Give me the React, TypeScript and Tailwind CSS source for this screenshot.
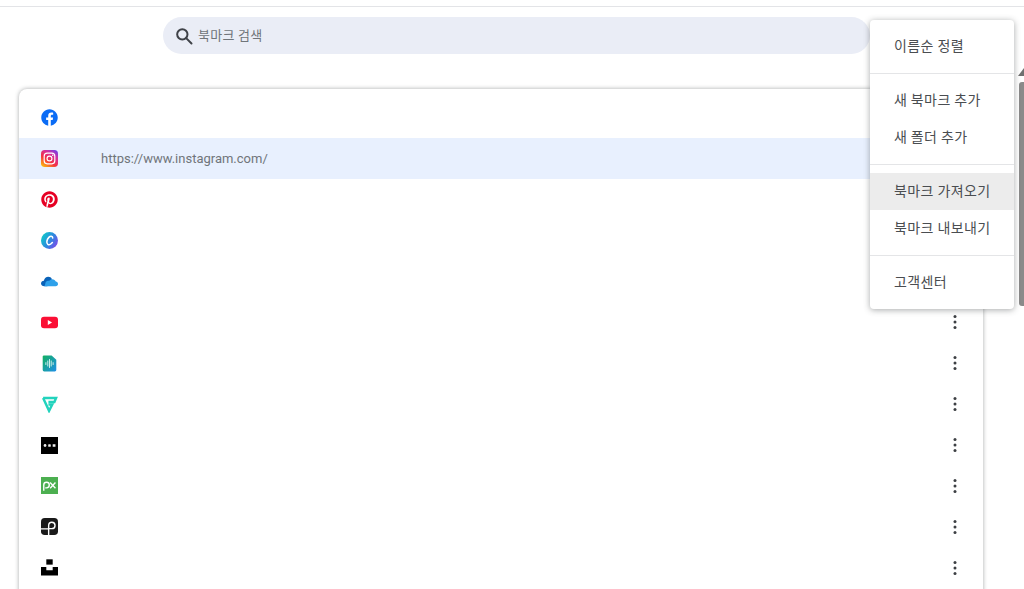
import React from "react";
import { FaFacebook, FaPinterest } from "react-icons/fa";

const F = { fontFamily: '"Noto Sans CJK KR","Noto Sans",sans-serif' };

function Icon({ i }: { i: number }) {
  const c = "w-[17px] h-[17px] block";
  switch (i) {
    case 0:
      return <FaFacebook className={`${c} text-[#0b6cf5]`} />;
    case 1:
      return (
        <svg viewBox="0 0 16 16" className={c}>
          <defs>
            <linearGradient id="ig" x1="0.1" y1="1" x2="0.8" y2="0">
              <stop offset="0" stopColor="#fdc30b" />
              <stop offset="0.4" stopColor="#f5333f" />
              <stop offset="0.75" stopColor="#d32ea0" />
              <stop offset="1" stopColor="#7a3fe0" />
            </linearGradient>
          </defs>
          <rect width="16" height="16" rx="3.5" fill="url(#ig)" />
          <rect x="3" y="3" width="10" height="10" rx="2.8" fill="none" stroke="#fff" strokeWidth="1.1" />
          <circle cx="8" cy="8" r="2.3" fill="none" stroke="#fff" strokeWidth="1.1" />
          <circle cx="11" cy="5" r="0.7" fill="#fff" />
        </svg>
      );
    case 2:
      return <FaPinterest className={`${c} text-[#e60023]`} />;
    case 3:
      return (
        <svg viewBox="0 0 16 16" className={c}>
          <defs>
            <linearGradient id="cv" x1="0" y1="0.3" x2="1" y2="0.9">
              <stop offset="0" stopColor="#0fc7c9" />
              <stop offset="0.5" stopColor="#2f86e0" />
              <stop offset="1" stopColor="#8b3fea" />
            </linearGradient>
          </defs>
          <circle cx="8" cy="8" r="8" fill="url(#cv)" />
          <path d="M11 5.6C11 3.6 8.8 3.6 7.4 5 5.4 7 4.8 10.6 6.4 11.6c1.3.8 3-.1 4.3-1.7" fill="none" stroke="#fff" strokeWidth="1.5" strokeLinecap="round" />
        </svg>
      );
    case 4:
      return (
        <svg viewBox="0 0 16 16" className={c}>
          <path d="M3.2 12.4C1.3 12.4 0 11.2 0 9.8c0-1.5 1.2-2.6 2.7-2.6C3.2 5.2 4.9 3.6 6.8 3.6c1.6 0 2.8.8 3.5 2.2L6 12.4z" fill="#0a62b8" />
          <path d="M3.2 12.4h10.6c1.3 0 2.2-.9 2.2-2.1 0-1.2-.9-2.1-2.1-2.2-.4-1.4-1.7-2.3-3.2-2.3-1.2 0-2.3.6-2.9 1.6-.5-.2-1-.2-1.5-.1-1.4.4-2.2 1.5-2.3 2.7-.1.9-.4 1.7-.8 2.4z" fill="#2ea1ea" />
        </svg>
      );
    case 5:
      return (
        <svg viewBox="0 0 16 16" className={c}>
          <rect x="0" y="2.5" width="16" height="11" rx="2.8" fill="#fb0f35" />
          <path d="M6.4 5.7 10.4 8l-4 2.3z" fill="#fff" />
        </svg>
      );
    case 6:
      return (
        <svg viewBox="0 0 16 16" className={c}>
          <defs>
            <linearGradient id="cl" x1="0" y1="0" x2="1" y2="1">
              <stop offset="0" stopColor="#12b060" />
              <stop offset="1" stopColor="#1f8fe8" />
            </linearGradient>
          </defs>
          <path d="M2.4 0.4H10L14.4 4.4V14.2a1.4 1.4 0 0 1-1.4 1.4H3a1.4 1.4 0 0 1-1.4-1.4V1.2z" fill="url(#cl)" />
          <path d="M4.6 7.2v1.8M6.4 5.6v4.8M8 4.2v7.6M9.6 5.6v4.8M11.4 7.2v1.8" stroke="#d6f2ec" strokeWidth="0.9" strokeLinecap="round" />
        </svg>
      );
    case 7:
      return (
        <svg viewBox="0 0 16 16" className={c} fill="none" stroke="#22d3bd" strokeWidth="2.3" strokeLinejoin="miter">
          <path d="M2 1.8H14.2L12.6 5.6H7" />
          <path d="M2 1.8 7.6 14 10.6 8H7" />
        </svg>
      );
    case 8:
      return (
        <svg viewBox="0 0 16 16" className={c}>
          <rect width="16" height="16" fill="#000" />
          <circle cx="3.8" cy="8" r="1.3" fill="#eee" />
          <rect x="6.8" y="6.8" width="2.4" height="2.4" rx="0.6" fill="#eee" />
          <rect x="11" y="6.8" width="2.6" height="2.4" fill="#eee" />
        </svg>
      );
    case 9:
      return (
        <svg viewBox="0 0 16 16" className={c}>
          <rect width="16" height="16" fill="#4caf50" />
          <path d="M2.6 13V7.6a2.6 2.6 0 1 1 2.6 2.6H4" fill="none" stroke="#fff" strokeWidth="1.3" />
          <path d="M8.6 5.2l5 5.4M13.6 5.2l-5 5.4" fill="none" stroke="#fff" strokeWidth="1.3" />
        </svg>
      );
    case 10:
      return (
        <svg viewBox="0 0 16 16" className={c}>
          <rect width="16" height="16" rx="3.5" fill="#1a1a1a" />
          <path d="M0 10.2h7.2V16M7.2 10.2V7a3 3 0 1 1 3 3H7" fill="none" stroke="#fff" strokeWidth="1.3" />
        </svg>
      );
    default:
      return (
        <svg viewBox="0 0 16 16" className={c}>
          <rect x="5" y="0.3" width="6" height="5" fill="#000" />
          <path d="M0 7.5h5v3h6v-3h5v8H0z" fill="#000" />
        </svg>
      );
  }
}

function Dots() {
  return (
    <svg viewBox="0 0 4 16" className="w-1 h-4 block text-[#3c3f43]" fill="currentColor">
      <circle cx="2" cy="2.6" r="1.5" />
      <circle cx="2" cy="8" r="1.5" />
      <circle cx="2" cy="13.4" r="1.5" />
    </svg>
  );
}

const menu = [
  { items: ["이름순 정렬"] },
  { items: ["새 북마크 추가", "새 폴더 추가"] },
  { items: ["북마크 가져오기", "북마크 내보내기"] },
  { items: ["고객센터"] },
];

export default function App() {
  return (
    <div className="relative h-[589px] w-[1024px] overflow-hidden bg-white" style={F}>
      <div className="mt-[6px] h-px bg-[#e3e4e7]" />
      <div className="ml-[163px] mt-[10px] flex h-[37px] w-[707px] items-center rounded-full bg-[#eaedf6] pl-[11px]">
        <svg viewBox="0 0 24 24" className="h-[20px] w-[20px] text-[#3f4248]" fill="none" stroke="currentColor" strokeWidth="2.4">
          <circle cx="10" cy="10" r="6.2" />
          <path d="M14.6 14.6 21 21" strokeLinecap="round" />
        </svg>
        <span className="ml-[4px] -translate-y-[1px] text-[13px] tracking-[0.3px] text-[#70757a]">북마크 검색</span>
      </div>

      <div className="ml-[19px] mt-[35px] h-[520px] w-[964px] rounded-t-[8px] bg-white pt-[8.5px] shadow-[0_0_4px_rgba(60,64,67,0.45)]">
        {Array.from({ length: 12 }).map((_, i) => (
          <div key={i} className={`flex h-[40.9px] items-center pl-[22px] pr-[26.5px] ${i === 1 ? "bg-[#e8f0fe]" : ""}`}>
            <Icon i={i} />
            {i === 1 && <span className="ml-[43px] text-[13px] text-[#70757a]" style={{ fontFamily: "Roboto,sans-serif" }}>https://www.instagram.com/</span>}
            {i !== 1 && i >= 5 && <div className="ml-auto"><Dots /></div>}
          </div>
        ))}
      </div>

      <div className="absolute left-[1019px] top-[82px] h-[224px] w-[5px] rounded-l-[3px] bg-[#8a8a8a]" />
      <svg viewBox="0 0 12 8" className="absolute left-[1018px] top-[68px] h-[8px] w-[12px] text-[#707070]" fill="currentColor">
        <path d="M6 0 12 8H0z" />
      </svg>

      <div className="absolute left-[870px] top-[20px] w-[144px] rounded-[4px] bg-white shadow-[0_1px_6px_rgba(60,64,67,0.45)]">
        {menu.map((g, gi) => (
          <div key={gi} className={`${gi > 0 ? "border-t border-[#e4e5e7]" : ""} py-[8px]`}>
            {g.items.map((t) => (
              <div key={t} className={`flex h-[37px] items-center pl-[24px] text-[14px] tracking-[0.4px] text-[#4a4d51] ${t === "북마크 가져오기" ? "bg-[#ececec]" : ""}`}>
                <span className="-translate-y-[1px]">{t}</span>
              </div>
            ))}
          </div>
        ))}
      </div>
    </div>
  );
}
